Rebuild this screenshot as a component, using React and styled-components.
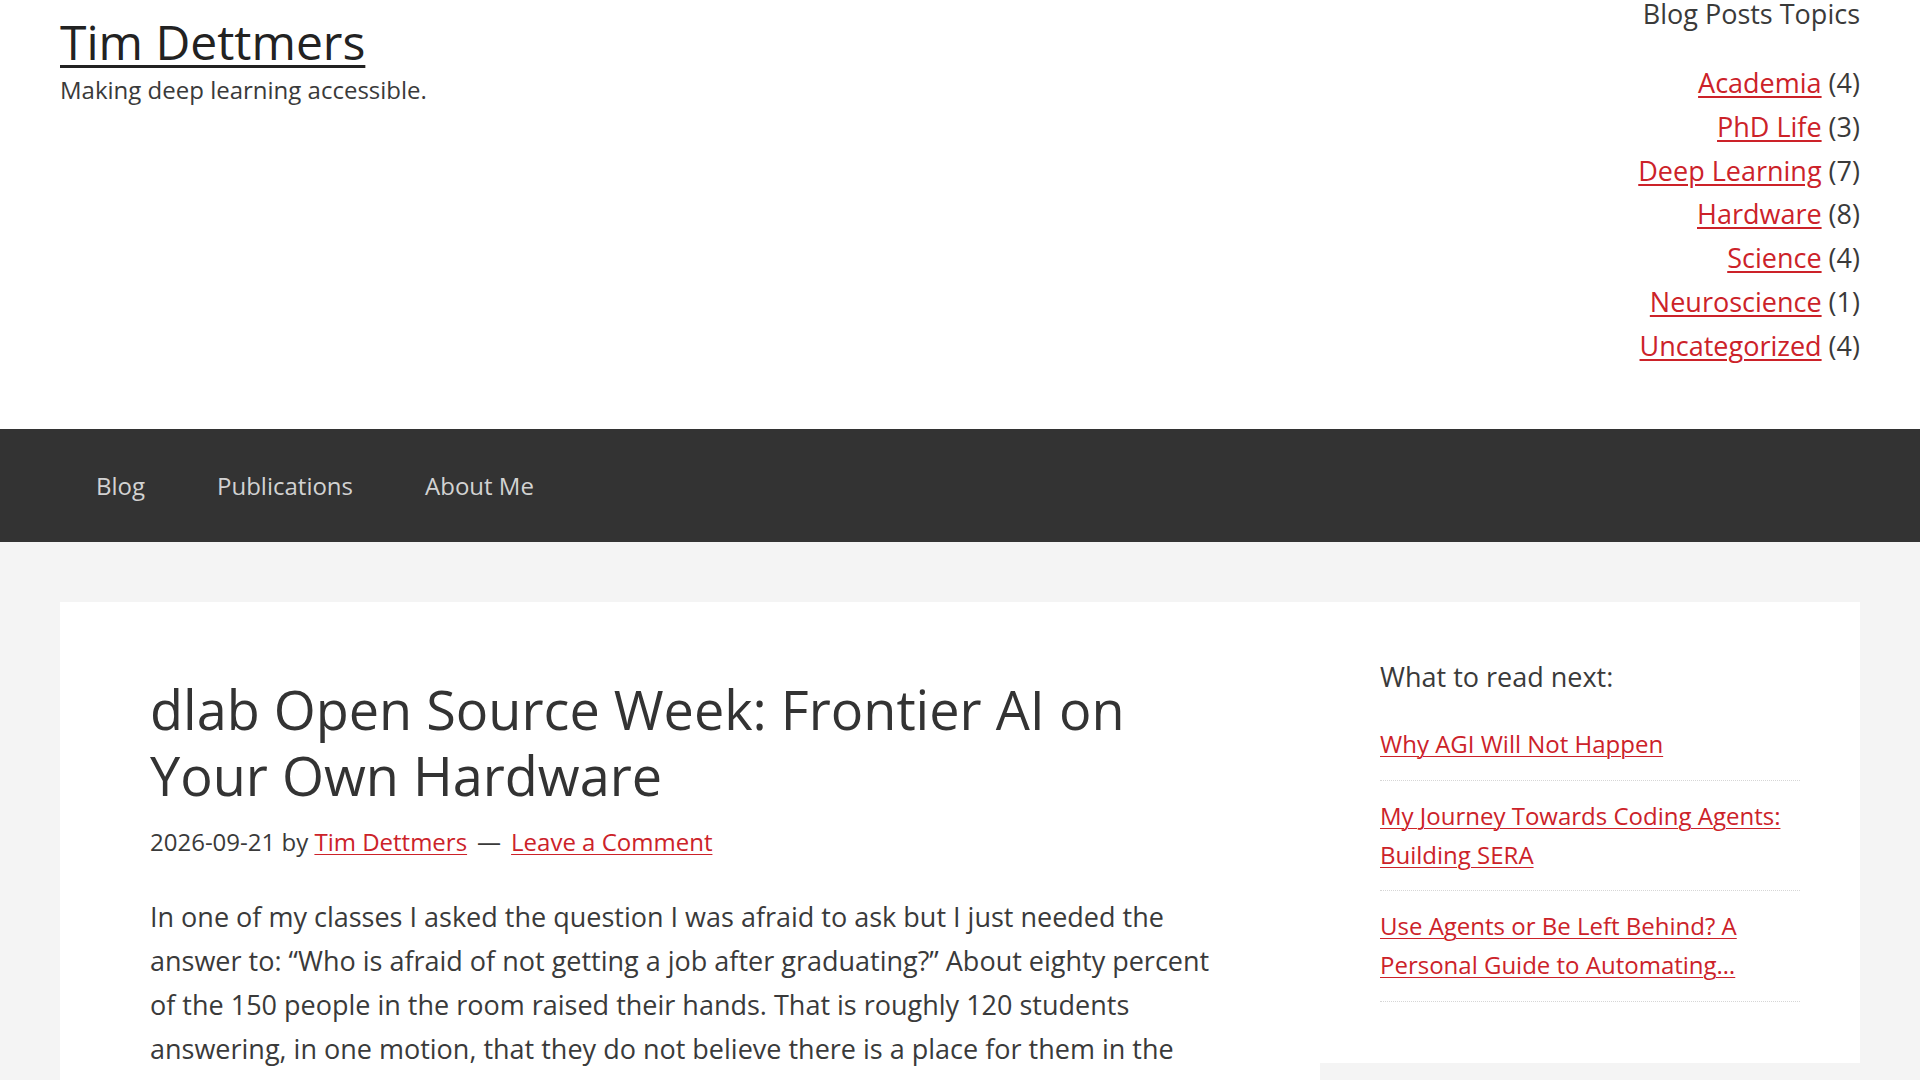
import styled, { createGlobalStyle } from 'styled-components';

const GlobalStyle = createGlobalStyle`
  html, body {
    margin: 0;
    padding: 0;
  }
  body {
    background: #f4f4f4;
    color: #3a3a3a;
    font-family: 'Open Sans', 'Liberation Sans', sans-serif;
    -webkit-font-smoothing: antialiased;
  }
  * {
    box-sizing: border-box;
  }
`;

const Header = styled.header`
  background: #ffffff;
  display: flex;
  justify-content: space-between;
  align-items: flex-start;
  padding: 0 60px 61.5px;
`;

const Branding = styled.div`
  padding-top: 13px;
`;

const SiteTitle = styled.a`
  display: block;
  font-size: 48px;
  line-height: 1.2;
  color: #222222;
  text-decoration: underline;
  text-decoration-thickness: 3px;
  text-underline-offset: 5px;
`;

const Tagline = styled.p`
  margin: 0;
  font-size: 24px;
  line-height: 1.6;
  color: #3a3a3a;
`;

const TopicsWidget = styled.aside`
  text-align: right;
`;

const TopicsTitle = styled.h2`
  margin: 0 0 34px;
  font-size: 27px;
  line-height: 27px;
  font-weight: 400;
  color: #3a3a3a;
`;

const TopicList = styled.ul`
  list-style: none;
  margin: 0;
  padding: 0;
`;

const TopicItem = styled.li`
  font-size: 27px;
  line-height: 43.8px;
  color: #3a3a3a;
`;

const RedLink = styled.a`
  color: #cc2229;
  text-decoration: underline;
  text-decoration-thickness: ${(p) => (p.$thin ? '1px' : '2px')};
  text-underline-offset: 3px;
`;

const Nav = styled.nav`
  background: #333333;
  height: 113px;
  display: flex;
  align-items: center;
  padding: 0 60px;
`;

const NavItem = styled.a`
  padding: 0 36px;
  font-size: 24px;
  line-height: 113px;
  color: #d2d2d2;
  text-decoration: none;
`;

const Main = styled.div`
  padding: 60px 60px 0;
`;

const Card = styled.div`
  display: flex;
  align-items: flex-start;
`;

const Article = styled.article`
  width: 1260px;
  background: #ffffff;
  padding: 74px 90px 60px;
`;

const PostTitle = styled.h1`
  margin: 0 0 15px;
  font-size: 54px;
  line-height: 66px;
  font-weight: 400;
  color: #333333;
`;

const Meta = styled.div`
  font-size: 24px;
  line-height: 1.6;
  color: #3a3a3a;
`;

const Dash = styled.span`
  margin: 0 10px;
`;

const Body = styled.div`
  margin-top: 34px;
  font-size: 27px;
  line-height: 43.7px;
  color: #3a3a3a;

  p {
    margin: 0 0 43px;
  }
`;

const Sidebar = styled.aside`
  width: 540px;
  background: #ffffff;
  padding: 59px 60px 61px;
`;

const WidgetTitle = styled.h2`
  margin: 0 0 16px;
  font-size: 27px;
  line-height: 1.2;
  font-weight: 400;
  color: #3a3a3a;
`;

const ReadList = styled.ul`
  list-style: none;
  margin: 0;
  padding: 0;
`;

const ReadItem = styled.li`
  padding: 15px 0 16.5px;
  border-bottom: 1px dotted #d6d6d6;
  font-size: 24px;
  line-height: 39px;
`;

const topics = [
  ['Academia', 4],
  ['PhD Life', 3],
  ['Deep Learning', 7],
  ['Hardware', 8],
  ['Science', 4],
  ['Neuroscience', 1],
  ['Uncategorized', 4],
];

const nextReads = [
  'Why AGI Will Not Happen',
  'My Journey Towards Coding Agents: Building SERA',
  'Use Agents or Be Left Behind? A Personal Guide to Automating…',
];

export default function App() {
  return (
    <>
      <GlobalStyle />
      <Header>
        <Branding>
          <SiteTitle href="#">Tim Dettmers</SiteTitle>
          <Tagline>Making deep learning accessible.</Tagline>
        </Branding>
        <TopicsWidget>
          <TopicsTitle>Blog Posts Topics</TopicsTitle>
          <TopicList>
            {topics.map(([name, count]) => (
              <TopicItem key={name}>
                <RedLink href="#">{name}</RedLink> ({count})
              </TopicItem>
            ))}
          </TopicList>
        </TopicsWidget>
      </Header>
      <Nav>
        <NavItem href="#">Blog</NavItem>
        <NavItem href="#">Publications</NavItem>
        <NavItem href="#">About Me</NavItem>
      </Nav>
      <Main>
        <Card>
          <Article>
            <PostTitle>dlab Open Source Week: Frontier AI on Your Own Hardware</PostTitle>
            <Meta>
              2026-09-21 by <RedLink href="#" $thin>Tim Dettmers</RedLink>
              <Dash>—</Dash>
              <RedLink href="#" $thin>Leave a Comment</RedLink>
            </Meta>
            <Body>
              <p>
                In one of my classes I asked the question I was afraid to ask but I just needed the
                answer to: “Who is afraid of not getting a job after graduating?” About eighty percent
                of the 150 people in the room raised their hands. That is roughly 120 students
                answering, in one motion, that they do not believe there is a place for them in the
                future that AI is building. I think this is wrong, and this week is my attempt to
                show why.
              </p>
            </Body>
          </Article>
          <Sidebar>
            <WidgetTitle>What to read next:</WidgetTitle>
            <ReadList>
              {nextReads.map((title) => (
                <ReadItem key={title}>
                  <RedLink href="#" $thin>{title}</RedLink>
                </ReadItem>
              ))}
            </ReadList>
          </Sidebar>
        </Card>
      </Main>
    </>
  );
}
